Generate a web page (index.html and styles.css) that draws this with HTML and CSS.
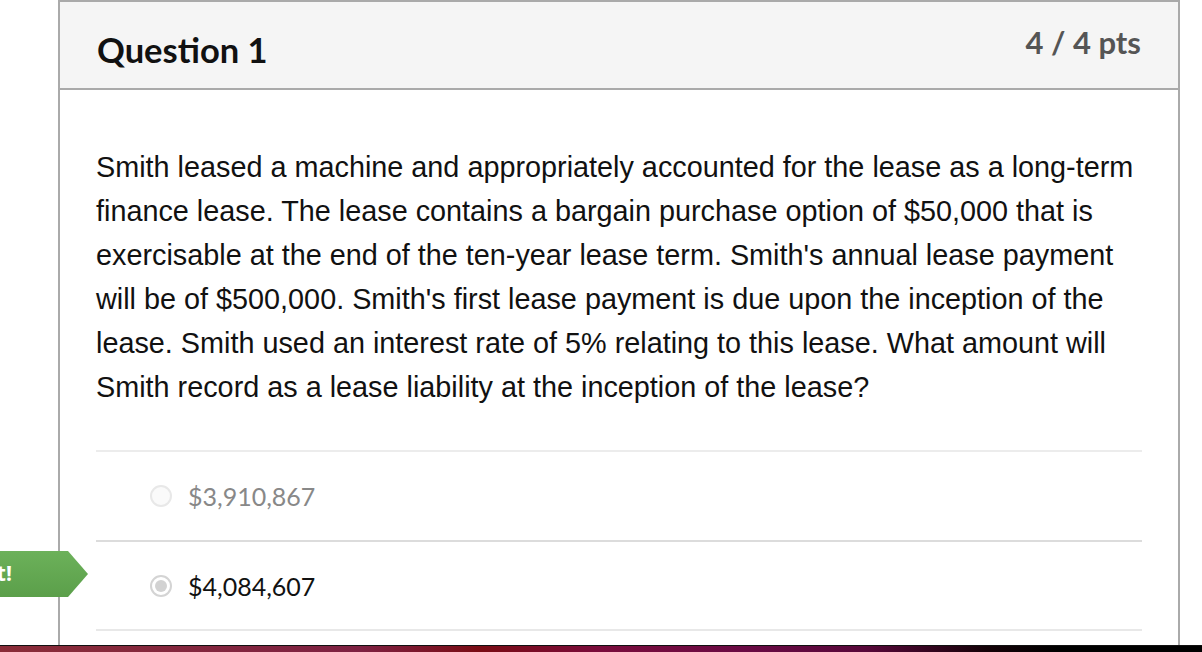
FILE: index.html
```html
<!DOCTYPE html>
<html lang="en">
<head>
  <meta charset="UTF-8">
  <title>Question 1</title>
  <link rel="stylesheet" href="styles.css">
</head>
<body>
  <div class="screen">
    <!-- 問題カード -->
    <div class="page">
      <div class="question card">
        <div class="header">
          <span class="title">Question 1</span>
          <span class="points">4 / 4 pts</span>
        </div>
        <div class="content">
          <p class="question-text">Smith leased a machine and appropriately accounted for the lease as a long-term finance lease. The lease contains a bargain purchase option of $50,000 that is exercisable at the end of the ten-year lease term. Smith's annual lease payment will be of $500,000. Smith's first lease payment is due upon the inception of the lease. Smith used an interest rate of 5% relating to this lease. What amount will Smith record as a lease liability at the inception of the lease?</p>
          <div class="answers">
            <div class="answer">
              <span class="radio"></span>
              <span class="answer-text">$3,910,867</span>
            </div>
            <div class="answer selected">
              <span class="radio"></span>
              <span class="answer-text">$4,084,607</span>
            </div>
          </div>
        </div>
      </div>
      <!-- 正解ラベル -->
      <div class="correct-tag">Correct!</div>
    </div>
    <div class="dock"></div>
  </div>
</body>
</html>
```

FILE: styles.css
```css
/* ベース */
html, body { margin: 0; height: 100%; background: #fff; overflow: hidden; }
.screen { display: flex; flex-direction: column; height: 652px; }
.page { position: relative; flex: 1; overflow: hidden; }

/* カード */
.card { margin-left: 58px; width: 1122px; border: 2px solid #aaa; border-bottom: none; height: 100%; box-sizing: border-box; }
.header { display: flex; justify-content: space-between; height: 86px; padding: 0 37px; background: #f5f5f5; border-bottom: 2px solid #aaa; }
.title { font-family: Lato, "Liberation Sans", sans-serif; font-weight: 700; font-size: 34.5px; color: #111; padding-top: 27px; }
.points { font-family: Lato, "Liberation Sans", sans-serif; font-weight: 700; font-size: 31px; color: #555; padding-top: 21px; }

/* 問題文 */
.content { padding: 0 36px; }
.question-text { font-family: "Liberation Sans", Arial, sans-serif; font-size: 28.8px; line-height: 44px; color: #111; margin: 55px 0 41px; }

/* 選択肢 */
.answers { border-bottom: 2px solid #e8e8e8; }
.answer { display: flex; align-items: center; height: 88px; border-top: 2px solid #ececec; padding-left: 54px; }
.answer.selected { height: 87px; border-top-color: #dcdcdc; }
.radio { width: 18px; height: 18px; border-radius: 50%; border: 2px solid #e8e8e8; background: #fafafa; margin-right: 16px; position: relative; }
.answer.selected .radio { border-color: #d4d4d4; background: #fff; }
.answer.selected .radio::after { content: ""; position: absolute; left: 3px; top: 3px; width: 12px; height: 12px; border-radius: 50%; background: #d2d2d2; }
.answer-text { font-family: Lato, "Liberation Sans", sans-serif; font-size: 25px; color: #888; }
.answer.selected .answer-text { color: #111; }

/* 正解ラベル */
.correct-tag { position: absolute; left: -84px; top: 551px; width: 172px; height: 46px; box-sizing: border-box; padding-right: 76px; background: linear-gradient(#6cb15a, #5b9f4a); clip-path: polygon(0 0, 152px 0, 172px 50%, 152px 100%, 0 100%); color: #fff; font-family: "Open Sans", "Liberation Sans", sans-serif; font-weight: 700; font-size: 21px; line-height: 44px; text-align: right; white-space: nowrap; }

/* 下部のドック */
.dock { height: 6px; border-top: 1px solid #111; background: linear-gradient(90deg, #8a2c38 0%, #7e2142 30%, #7a0c14 40%, #7a0c3c 50%, #6a0a44 62%, #58083a 72%, #150208 82%, #000 88%, #000 100%); }
```
